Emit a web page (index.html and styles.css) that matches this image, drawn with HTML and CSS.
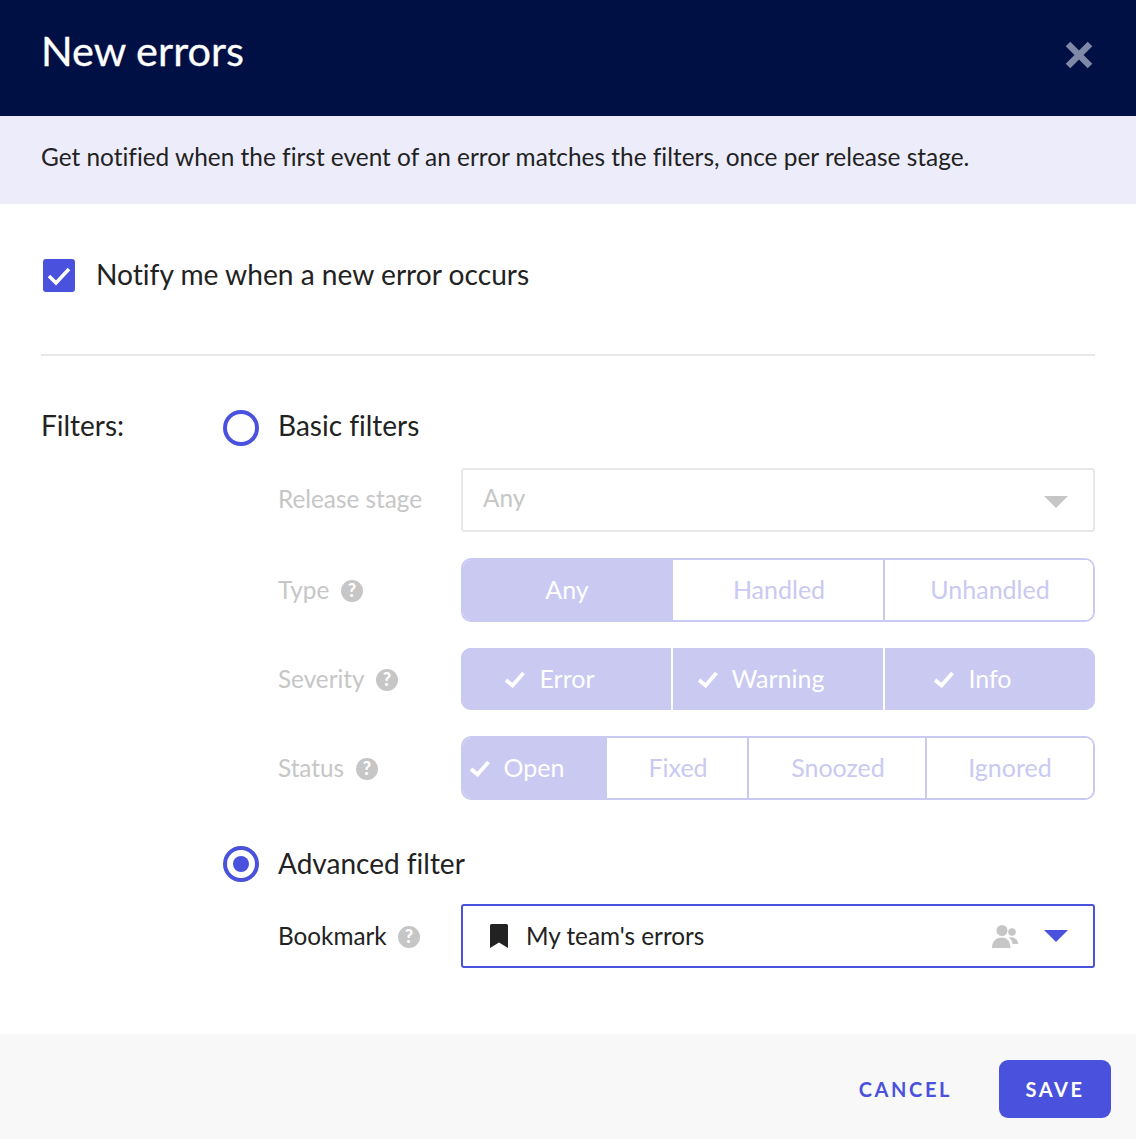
FILE: index.html
```html
<!DOCTYPE html>
<html lang="en">
<head>
<meta charset="utf-8">
<title>New errors</title>
<link rel="stylesheet" href="styles.css">
</head>
<body>
<div class="dialog">
  <header class="head">
    <h1 class="title">New errors</h1>
    <svg class="close" viewBox="0 0 28 28" width="28" height="28"><path d="M3 3L25 25M25 3L3 25" stroke="#7f88a6" stroke-width="6.5" fill="none"/></svg>
  </header>
  <div class="intro">Get notified when the first event of an error matches the filters, once per release stage.</div>
  <main class="body">
    <div class="notify">
      <span class="checkbox"><svg viewBox="0 0 32 33" width="32" height="33"><path d="M6 17L13 24L26 10" stroke="#fff" stroke-width="3.6" fill="none"/></svg></span>
      <span class="notify-text">Notify me when a new error occurs</span>
    </div>
    <hr class="rule">
    <div class="filters">
      <div class="filters-label">Filters:</div>
      <div class="filters-main">
        <div class="radio-row"><span class="radio"></span><span class="radio-text">Basic filters</span></div>
        <div class="field field-select muted">
          <div class="label label-select">Release stage</div>
          <div class="select disabled"><span>Any</span><span class="caret caret-grey"></span></div>
        </div>
        <div class="field field-seg muted">
          <div class="label">Type <svg class="help" viewBox="0 0 22 22" width="22" height="22"><circle cx="11" cy="11" r="11" fill="#c6c6c6"/><text x="11" y="17" class="help-mark">?</text></svg></div>
          <div class="seg seg-outline">
            <div class="opt on w-type1">Any</div>
            <div class="opt shift w-type2">Handled</div>
            <div class="opt shift w-type3">Unhandled</div>
          </div>
        </div>
        <div class="field field-seg muted">
          <div class="label">Severity <svg class="help" viewBox="0 0 22 22" width="22" height="22"><circle cx="11" cy="11" r="11" fill="#c6c6c6"/><text x="11" y="17" class="help-mark">?</text></svg></div>
          <div class="seg seg-solid">
            <div class="opt on shift w-sev1"><span class="opt-text"><svg class="tick" viewBox="0 0 20 17" width="20" height="17"><path d="M1 9L7.500 14.500L18.500 2" stroke="#fff" stroke-width="3.800" fill="none"/></svg>Error</span></div>
            <div class="opt on w-sev2"><span class="opt-text"><svg class="tick" viewBox="0 0 20 17" width="20" height="17"><path d="M1 9L7.500 14.500L18.500 2" stroke="#fff" stroke-width="3.800" fill="none"/></svg>Warning</span></div>
            <div class="opt on w-sev3"><span class="opt-text"><svg class="tick" viewBox="0 0 20 17" width="20" height="17"><path d="M1 9L7.500 14.500L18.500 2" stroke="#fff" stroke-width="3.800" fill="none"/></svg>Info</span></div>
          </div>
        </div>
        <div class="field field-seg muted">
          <div class="label">Status <svg class="help" viewBox="0 0 22 22" width="22" height="22"><circle cx="11" cy="11" r="11" fill="#c6c6c6"/><text x="11" y="17" class="help-mark">?</text></svg></div>
          <div class="seg seg-outline">
            <div class="opt on w-open"><span class="opt-text"><svg class="tick" viewBox="0 0 20 17" width="20" height="17"><path d="M1 9L7.500 14.500L18.500 2" stroke="#fff" stroke-width="3.800" fill="none"/></svg>Open</span></div>
            <div class="opt shift w-fixed">Fixed</div>
            <div class="opt shift w-snooze">Snoozed</div>
            <div class="opt w-ignored">Ignored</div>
          </div>
        </div>
        <div class="radio-row radio-adv"><span class="radio radio-on"></span><span class="radio-text radio-text-adv">Advanced filter</span></div>
        <div class="field field-book">
          <div class="label">Bookmark <svg class="help" viewBox="0 0 22 22" width="22" height="22"><circle cx="11" cy="11" r="11" fill="#c6c6c6"/><text x="11" y="17" class="help-mark">?</text></svg></div>
          <div class="select active">
            <svg class="bookmark" viewBox="0 0 20 26" width="20" height="26"><path d="M2.500 1H17.500Q19 1 19 2.500V25L10 19.500L1 25V2.500Q1 1 2.500 1Z" fill="#222"/></svg>
            <span class="select-text">My team's errors</span>
            <svg class="people" viewBox="0 0 26 24" width="26" height="24"><circle cx="10" cy="6.500" r="5.500" fill="#c6c6c6"/><circle cx="20" cy="8" r="3.800" fill="#c6c6c6"/><path d="M0 24C0 17 4 13.500 10 13.500C15 13.500 18 17 18.500 24Z" fill="#c6c6c6"/><path d="M17 13.500C21 12.500 26 14.500 26 20H20.500C20.500 17.500 19 15.500 17 13.500Z" fill="#c6c6c6"/></svg>
            <span class="caret caret-blue"></span>
          </div>
        </div>
      </div>
    </div>
  </main>
  <footer class="foot">
    <span class="cancel">CANCEL</span>
    <span class="save">SAVE</span>
  </footer>
</div>
</body>
</html>
```

FILE: styles.css
```css
* { box-sizing: border-box; }
html, body { margin: 0; padding: 0; background: #fff; }
body { font-family: "Lato", "Open Sans", sans-serif; color: #222; font-variant-ligatures: none; }
.dialog { width: 1136px; height: 1139px; display: flex; flex-direction: column; }
.head { height: 116px; background: #011044; display: flex; justify-content: space-between; align-items: flex-start; padding: 0 43px 0 41px; }
.title { margin: 24px 0 0; font-size: 41.500px; line-height: 52px; font-weight: 400; color: #fff; -webkit-text-stroke: 0.3px #fff; }
.close { margin-top: 41px; }
.intro { height: 88px; background: #edecfa; padding: 0 41px; font-size: 24.420px; line-height: 82px; white-space: nowrap; }
.body { flex: 1; padding: 0 41px; }
.notify { display: flex; align-items: flex-start; margin-top: 55px; height: 33px; margin-left: 2px; }
.checkbox { width: 32px; height: 33px; background: #4951dd; border-radius: 3px; display: block; flex: none; }
.checkbox svg { display: block; }
.notify-text { font-size: 28.150px; margin-left: 21px; line-height: 30px; }
.rule { border: 0; border-top: 2px solid #e8e8e8; margin: 62px 0 0; }
.filters { display: flex; margin-top: 54px; }
.filters-label { width: 182px; font-size: 28px; line-height: 30px; }
.filters-main { flex: 1; }
.radio-row { display: flex; align-items: center; height: 36px; font-size: 28px; }
.radio-text { padding-bottom: 6px; margin-left: -1px; }
.radio-text-adv { padding-bottom: 2px; }
.radio { width: 36px; height: 36px; border: 4px solid #4951dd; border-radius: 50%; margin-right: 20px; flex: none; position: relative; }
.radio-on::after { content: ""; position: absolute; left: 6px; top: 6px; width: 16px; height: 16px; border-radius: 50%; background: #4951dd; }
.field { display: flex; align-items: center; margin-left: 55px; }
.label { width: 183px; font-size: 24.300px; display: flex; align-items: center; gap: 11.500px; white-space: nowrap; padding-bottom: 2px; }
.label-select { padding-bottom: 4px; }
.help { flex: none; position: relative; top: 2px; }
.help-mark { font-family: "Lato", sans-serif; font-size: 18px; font-weight: 900; fill: #fff; text-anchor: middle; }
.muted .label { color: #c6c6c6; }
.field-select { margin-top: 22px; }
.field-seg { margin-top: 26px; }
.radio-adv { margin-top: 46px; }
.field-book { margin-top: 22px; }
.select { width: 634px; height: 64px; border-radius: 3px; display: flex; align-items: center; font-size: 24.300px; }
.disabled { border: 2px solid #e8e8e8; color: #c6c6c6; padding: 0 25px 5px 20px; justify-content: space-between; }
.active { border: 2px solid #4951dd; padding: 0 25px 0 26px; }
.select-text { margin-left: 17px; flex: 1; padding-bottom: 2px; }
.people { margin-right: 26px; }
.caret { width: 0; height: 0; border-left: 12px solid transparent; border-right: 12px solid transparent; display: block; }
.caret-grey { border-top: 12px solid #c6c6c6; margin-top: 9px; }
.caret-blue { border-top: 12px solid #4951dd; }
.seg { width: 634px; display: flex; border-radius: 10px; overflow: hidden; font-size: 25px; }
.seg-outline { height: 64px; border: 2px solid #c9c9f2; }
.seg-solid { height: 62px; background: #c9c9f2; }
.opt { display: flex; align-items: center; justify-content: center; color: #c9c9f2; border-left: 2px solid #c9c9f2; background: #fff; padding-bottom: 3px; }
.opt:first-child { border-left: 0; }
.opt.on { background: #c9c9f2; color: #fff; }
.opt.shift { padding-left: 2px; }
.seg-solid .opt { border-left-color: #fff; }
.opt-text { position: relative; }
.tick { position: absolute; right: 100%; top: 50%; margin-top: -7px; margin-right: 14px; }
.w-sev1 { width: 210px; flex: none; }
.w-sev2 { width: 212px; flex: none; }
.w-sev3 { flex: 1; }
.w-type1 { width: 208px; flex: none; }
.w-type2 { width: 212px; flex: none; }
.w-type3 { flex: 1; }
.w-open { width: 142px; flex: none; }
.w-fixed { width: 142px; flex: none; }
.w-snooze { width: 178px; flex: none; }
.w-ignored { flex: 1; }
.foot { height: 105px; background: #f8f8f8; display: flex; align-items: center; justify-content: flex-end; padding: 5px 25px 0 0; }
.cancel { color: #4951dd; font-size: 20px; font-weight: 700; letter-spacing: 2.600px; margin-right: 47px; }
.save { width: 112px; height: 58px; background: #4951dd; color: #fff; border-radius: 9px; font-size: 20px; font-weight: 700; letter-spacing: 2.600px; display: flex; align-items: center; justify-content: center; }
```
